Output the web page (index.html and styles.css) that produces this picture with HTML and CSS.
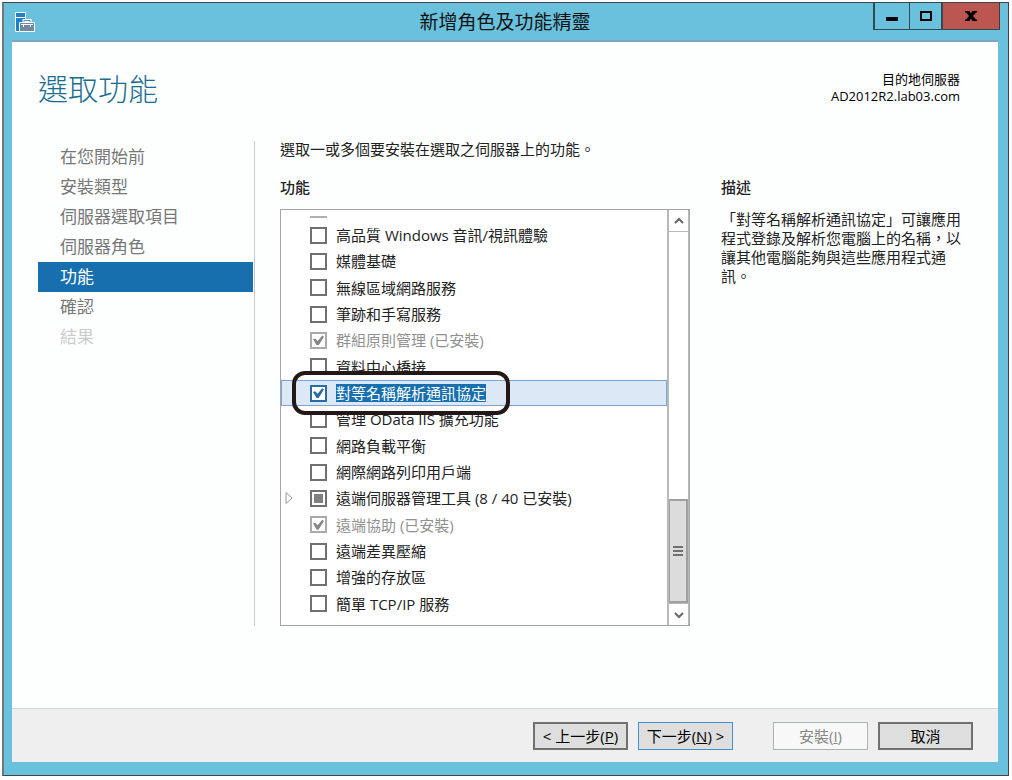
FILE: index.html
```html
<!DOCTYPE html>
<html lang="zh-Hant">
<head>
  <meta charset="UTF-8" />
  <meta name="viewport" content="width=device-width, initial-scale=1.0"/>
  <title>新增角色及功能精靈</title>
  <link rel="stylesheet" href="styles.css">
</head>
<body>
  <div class="window">

    <header class="titlebar">
      <svg class="app-icon" width="20" height="20" viewBox="0 0 20 20" aria-hidden="true">
        <path d="M0.5 0.5h10v19h-10z" fill="#1f7fc8" stroke="#fff"/>
        <path d="M1 5.500h9" stroke="#fff"/>
        <path d="M9 10V8.500h6V10" fill="none" stroke="#fff" stroke-width="3"/>
        <path d="M4.500 10.500h15v9h-15z" fill="#6f8ba0" stroke="#fff"/>
        <path d="M9 10V8.500h6V10" fill="none" stroke="#6f8ba0"/>
        <path d="M6 12.500h12M8.500 12v3M15.500 12v3" fill="none" stroke="#fff"/>
      </svg>
      <h1>新增角色及功能精靈</h1>
      <div class="controls">
        <button class="min" aria-label="最小化"><svg width="12" height="12" viewBox="0 0 12 12"><path d="M0 7h12v4H0z"/></svg></button>
        <button class="max" aria-label="最大化"><svg width="12" height="12" viewBox="0 0 12 12"><path d="M1 2h10v8H1z" fill="none" stroke="#000" stroke-width="2"/><path d="M0 1h12v2H0z"/></svg></button>
        <button class="close" aria-label="關閉"><svg width="12" height="12" viewBox="0 0 12 12"><path d="M0 1h4.500l1.500 2.500 1.500-2.500H12v1.500h-1L8 6l3 3.500h1V11H7.500L6 8.500 4.500 11H0V9.500h1L4 6 1 2.500H0z"/></svg></button>
      </div>
    </header>

    <div class="client">
      <div class="page-head">
        <h2>選取功能</h2>
        <p class="server">目的地伺服器<br>AD2012R2.lab03.com</p>
      </div>

      <div class="wizard">
        <nav class="steps">
          <a href="#before">在您開始前</a>
          <a href="#type">安裝類型</a>
          <a href="#server">伺服器選取項目</a>
          <a href="#roles">伺服器角色</a>
          <a href="#features" class="current">功能</a>
          <a href="#confirm">確認</a>
          <a class="off">結果</a>
        </nav>

        <main class="features">
          <p>選取一或多個要安裝在選取之伺服器上的功能。</p>
          <h3>功能</h3>
          <div class="tree-box">
            <div class="tree">
              <div class="cut-row"></div>
              <ul>
                <li><label><input type="checkbox"><span>高品質 Windows 音訊/視訊體驗</span></label></li>
                <li><label><input type="checkbox"><span>媒體基礎</span></label></li>
                <li><label><input type="checkbox"><span>無線區域網路服務</span></label></li>
                <li><label><input type="checkbox"><span>筆跡和手寫服務</span></label></li>
                <li><label><input type="checkbox" checked disabled><span>群組原則管理 (已安裝)</span></label></li>
                <li><label><input type="checkbox"><span>資料中心橋接</span></label></li>
                <li class="selected"><label><input type="checkbox" checked><span>對等名稱解析通訊協定</span></label></li>
                <li><label><input type="checkbox"><span>管理 OData IIS 擴充功能</span></label></li>
                <li><label><input type="checkbox"><span>網路負載平衡</span></label></li>
                <li><label><input type="checkbox"><span>網際網路列印用戶端</span></label></li>
                <li class="parent">
                  <svg class="expander" width="8" height="14" viewBox="0 0 8 14" aria-hidden="true"><path d="M1 1.500v11l6-5.500z" fill="none" stroke="#999"/></svg>
                  <label><input type="checkbox" class="partial"><span>遠端伺服器管理工具 (8 / 40 已安裝)</span></label>
                </li>
                <li><label><input type="checkbox" checked disabled><span>遠端協助 (已安裝)</span></label></li>
                <li><label><input type="checkbox"><span>遠端差異壓縮</span></label></li>
                <li><label><input type="checkbox"><span>增強的存放區</span></label></li>
                <li><label><input type="checkbox"><span>簡單 TCP/IP 服務</span></label></li>
              </ul>
            </div>
            <div class="scrollbar">
              <button aria-label="向上捲動"><svg width="10" height="8" viewBox="0 0 10 8"><path d="M1 6l4-4 4 4" fill="none" stroke="#666" stroke-width="2"/></svg></button>
              <div class="track"><div class="thumb"><i></i><i></i><i></i></div></div>
              <button aria-label="向下捲動"><svg width="10" height="8" viewBox="0 0 10 8"><path d="M1 2l4 4 4-4" fill="none" stroke="#666" stroke-width="2"/></svg></button>
            </div>
          </div>
        </main>

        <aside class="description">
          <h3>描述</h3>
          <p>「對等名稱解析通訊協定」可讓應用程式登錄及解析您電腦上的名稱，以讓其他電腦能夠與這些應用程式通訊。</p>
        </aside>
      </div>

      <footer class="actions">
        <button>&lt; 上一步(<u>P</u>)</button>
        <button class="default">下一步(<u>N</u>) &gt;</button>
        <button class="install" disabled>安裝(<u>I</u>)</button>
        <button>取消</button>
      </footer>
    </div>

  </div>
</body>
</html>
```

FILE: styles.css
```css
*, *::before, *::after {
  box-sizing: border-box;
}

body {
  margin: 0;
  padding: 2px 3px 4px 2px;
  min-height: 100vh;
  display: flex;
  font-family: "Open Sans", "Noto Sans CJK TC", sans-serif;
  font-size: 15px;
  line-height: 19px;
  color: #222;
  background: #fff;
}

h1, h2, h3, p, ul {
  margin: 0;
  padding: 0;
  font-size: inherit;
  font-weight: 400;
}

button {
  font: inherit;
  color: #000;
  padding: 0;
}

.window {
  flex: 1;
  display: flex;
  flex-direction: column;
  padding: 0 10px 13px 8px;
  background: #6ac1dd;
  border: 1px solid #444;
  border-left: 2px solid #707878;
}

/* title bar */
.titlebar {
  display: grid;
  grid-template-columns: 1fr auto 1fr;
  height: 37px;
}

.app-icon {
  margin: 9px 0 0 3px;
}

.titlebar h1 {
  font-size: 19px;
  line-height: 38px;
  color: #111;
}

.controls {
  justify-self: end;
  display: flex;
  height: 28px;
  margin: -1px -2px 0 0;
}

.controls button {
  display: flex;
  align-items: center;
  justify-content: center;
  width: 36px;
  border: 1px solid #34484f;
  border-left-width: 2px;
  border-right: 0;
  background: #6ac1dd;
}

.controls .max {
  width: 32px;
  border-left-width: 1px;
}

.controls .close {
  width: 59px;
  border-right: 1px solid #5a3330;
  background: #bb5750;
}

/* white client area */
.client {
  flex: 1;
  display: flex;
  flex-direction: column;
  background: #fdfefe;
  border-top: 2px solid #7fa5bd;
}

.page-head {
  display: flex;
  justify-content: space-between;
  padding: 25px 38px 0 26px;
  height: 99px;
}

.page-head h2 {
  font-size: 30px;
  font-weight: 300;
  line-height: 44px;
  color: #1b6d90;
}

.server {
  padding-top: 4px;
  font-size: 13px;
  line-height: 17px;
  text-align: right;
  color: #000;
}

.wizard {
  flex: 1;
  display: flex;
  align-items: flex-start;
  padding: 0 35px 40px 26px;
}

.steps {
  width: 217px;
  min-height: 485px;
  display: flex;
  flex-direction: column;
  padding-top: 1px;
  border-right: 1px solid #c8cacc;
  margin-right: 25px;
}

.steps a {
  padding-left: 22px;
  margin-right: 1px;
  font-size: 17px;
  line-height: 30px;
  color: #777;
  text-decoration: none;
}

.steps .current {
  color: #fff;
  background: #176fae;
}

.steps .off {
  color: #ccc;
}

.features {
  flex: 1;
  margin-top: -1px;
}

.features h3,
.description h3 {
  font-weight: 500;
}

.features h3 {
  margin: 19px 0 12px;
}

.tree-box {
  display: flex;
  height: 417px;
  border: 1px solid #a5a5a5;
}

.tree {
  flex: 1;
  display: flex;
  flex-direction: column;
  background: #fff;
  padding-bottom: 8px;
}

/* bottom edge of the row scrolled out above */
.cut-row {
  width: 17px;
  height: 8px;
  margin: 0 0 4px 29px;
  border-bottom: 2px solid #b0b0b0;
}

.tree ul {
  flex: 1;
  display: flex;
  flex-direction: column;
  list-style: none;
}

.tree li {
  flex: 1;
  position: relative;
  display: flex;
  align-items: center;
  padding-left: 29px;
}

.tree label {
  display: flex;
  align-items: center;
  gap: 9px;
}

.tree span {
  line-height: 18px;
}

.expander {
  position: absolute;
  left: 4px;
}

.tree input {
  appearance: none;
  display: grid;
  place-items: center;
  width: 17px;
  height: 17px;
  margin: 0;
  border: 2px solid #707070;
  background: #fff;
}

.tree input:checked::before {
  content: "";
  width: 11px;
  height: 10px;
  background: #2b6ca0;
  clip-path: polygon(0 38%, 20% 30%, 42% 56%, 84% 0, 100% 12%, 50% 100%, 34% 100%);
}

.tree input:disabled {
  border-color: #aaa;
}

.tree input:disabled::before {
  background: #888;
}

.tree input:disabled + span {
  color: #909090;
}

.tree .partial::before {
  content: "";
  width: 9px;
  height: 9px;
  background: #808080;
}

.tree .selected {
  background: #dce8f6;
  box-shadow: inset 0 0 0 1px #7da5d6;
}

.selected span {
  color: #fff;
  background: #176fae;
}

.tree .selected input {
  border-color: #2b6ca0;
}

/* marker ring round the chosen feature */
.selected::after {
  content: "";
  position: absolute;
  z-index: 1;
  left: 11px;
  top: -9px;
  width: 218px;
  height: 44px;
  border: 4px solid #231815;
  border-radius: 13px;
}

.scrollbar {
  display: flex;
  flex-direction: column;
  width: 22px;
  border: 1px solid #b8b8b8;
  border-width: 0 1px 0 2px;
  background: #fff;
}

.scrollbar button {
  height: 21px;
  display: flex;
  align-items: center;
  justify-content: center;
  border: 0;
  background: #fff;
}

.track {
  flex: 1;
  display: flex;
  align-items: flex-end;
  border: 1px solid #b8b8b8;
  border-width: 1px 0;
}

.thumb {
  flex: 1;
  height: 104px;
  display: flex;
  flex-direction: column;
  align-items: center;
  justify-content: center;
  gap: 2px;
  background: #dcdcdc;
  border: 2px solid #a0a0a0;
  border-left-width: 1px;
}

.thumb i {
  width: 10px;
  height: 2px;
  background: #707070;
}

.description {
  width: 242px;
  margin: 37px 0 0 31px;
}

.description p {
  margin-top: 13px;
}

/* button row */
.actions {
  display: flex;
  gap: 10px;
  padding: 13px 25px 12px;
  justify-content: flex-end;
  background: #efefef;
  border-top: 1px solid #d6d6d8;
}

.actions button {
  width: 95px;
  height: 28px;
  border: 2px solid #707070;
  background: #dedede;
  line-height: 22px;
}

.actions .default {
  border: 1px solid #4490cf;
}

.actions .install {
  margin-left: 30px;
  border: 1px solid #adb2b5;
  color: #888;
  background: #f8f8f8;
}
```
